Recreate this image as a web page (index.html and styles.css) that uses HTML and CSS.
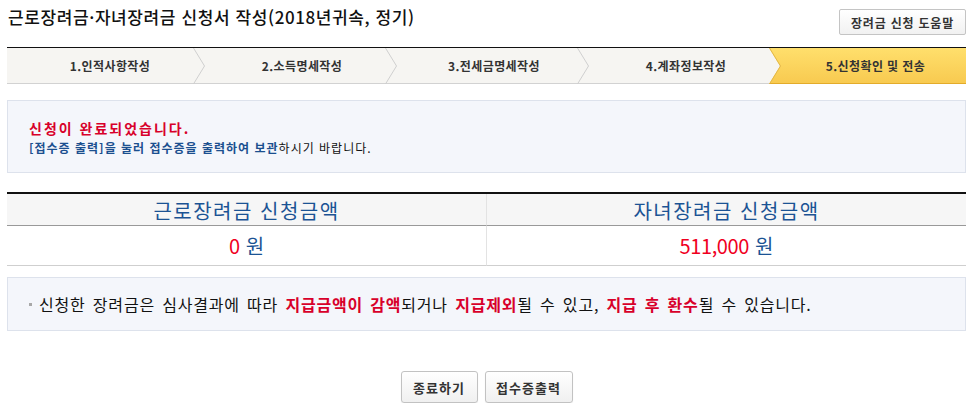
FILE: index.html
```html
<!DOCTYPE html>
<html lang="ko">
<head>
<meta charset="utf-8">
<title>근로장려금·자녀장려금 신청서 작성</title>
<link rel="stylesheet" href="styles.css">
</head>
<body>
<div class="page">
  <div class="head">
    <h1 class="title">근로장려금·자녀장려금 신청서 작성(2018년귀속, 정기)</h1>
    <button class="help-btn" type="button">장려금 신청 도움말</button>
  </div>

  <ol class="steps">
    <li class="step s1">1.인적사항작성<svg class="chev" viewBox="0 0 12 36" preserveAspectRatio="none"><polyline points="0.5,0 11.5,18 0.5,36" /></svg></li>
    <li class="step s2">2.소득명세작성<svg class="chev" viewBox="0 0 12 36" preserveAspectRatio="none"><polyline points="0.5,0 11.5,18 0.5,36" /></svg></li>
    <li class="step s3">3.전세금명세작성<svg class="chev" viewBox="0 0 12 36" preserveAspectRatio="none"><polyline points="0.5,0 11.5,18 0.5,36" /></svg></li>
    <li class="step s4">4.계좌정보작성<svg class="chev chev-active" viewBox="0 0 12 36" preserveAspectRatio="none"><polyline points="0.5,0 11.5,18 0.5,36" /></svg></li>
    <li class="step s5 active">5.신청확인 및 전송</li>
  </ol>

  <div class="info-box">
    <p class="done">신청이 완료되었습니다.</p>
    <p class="guide"><strong>[접수증 출력]을 눌러 접수증을 출력하여 보관</strong>하시기 바랍니다.</p>
  </div>

  <div class="amounts">
    <div class="cell th">근로장려금 신청금액</div>
    <div class="cell th">자녀장려금 신청금액</div>
    <div class="cell td"><span class="num">0</span> 원</div>
    <div class="cell td"><span class="num">511,000</span> 원</div>
  </div>

  <div class="notice">
    <span class="bullet"></span>
    <p>신청한 장려금은 심사결과에 따라 <em>지급금액이 감액</em>되거나 <em>지급제외</em>될 수 있고, <em>지급 후 환수</em>될 수 있습니다.</p>
  </div>

  <div class="actions">
    <button class="btn" type="button">종료하기</button>
    <button class="btn" type="button">접수증출력</button>
  </div>
</div>
</body>
</html>
```

FILE: styles.css
```css
* { box-sizing: border-box; }
html, body { margin: 0; padding: 0; background: #fff; }
body {
  font-family: "Noto Sans CJK KR", "Noto Sans", "Liberation Sans", sans-serif;
  color: #111;
}
p { margin: 0; }

.page {
  width: 977px;
  padding: 0 11px 0 7px;
}

.head {
  display: flex;
  justify-content: space-between;
  align-items: flex-start;
  height: 47px;
}
.title {
  margin: 4px 0 0 1px;
  font-size: 17px;
  font-weight: 500;
  line-height: 26px;
  letter-spacing: 0.6px;
  color: #111;
}
.help-btn {
  margin-top: 9px;
  width: 127px;
  height: 26px;
  padding: 0;
  font-family: inherit;
  font-size: 12px;
  font-weight: 700;
  color: #333;
  background: linear-gradient(#ffffff, #f1f1f1);
  border: 1px solid #c4c4c4;
  border-radius: 2px;
  letter-spacing: 0.8px;
}

.steps {
  list-style: none;
  margin: 0;
  padding: 0;
  display: flex;
  height: 37px;
  border-top: 1px solid #111;
  border-bottom: 1px solid #d2d2d2;
  background: #f6f5f2;
}
.step {
  position: relative;
  display: flex;
  align-items: center;
  justify-content: center;
  height: 35px;
  font-size: 12px;
  font-weight: 700;
  color: #333;
  letter-spacing: 0.4px;
}
.s1 { width: 186px; padding-left: 20px; }
.s2 { width: 192px; padding-left: 26px; }
.s3 { width: 192px; padding-left: 26px; }
.s4 { width: 192px; padding-left: 26px; }
.s5 { width: 197px; padding-left: 16px; }

.chev {
  position: absolute;
  top: 0;
  right: -12px;
  width: 12px;
  height: 36px;
  z-index: 2;
}
.chev polyline {
  fill: none;
  stroke: #cfcfcf;
  stroke-width: 1;
}
.chev-active polyline { stroke: #e2b84a; }

.step.active { z-index: 1; }
.step.active::before {
  content: "";
  position: absolute;
  left: 0;
  top: 0;
  right: 0;
  bottom: -1px;
  background: linear-gradient(#ffdf6c, #f8ca50 calc(100% - 1px), #e3ab2a calc(100% - 1px));
  clip-path: polygon(0 0, 100% 0, 100% 100%, 0 100%, 11px 50%);
  z-index: -1;
}

.info-box {
  margin-top: 16px;
  height: 73px;
  padding: 18px 21px 0;
  background: #f4f6fb;
  border: 1px solid #dde2ec;
}
.done {
  font-size: 14px;
  font-weight: 700;
  color: #d8002a;
  line-height: 18px;
  letter-spacing: 2px;
}
.guide {
  margin-top: 2px;
  font-size: 12px;
  line-height: 18px;
  color: #111;
  letter-spacing: 1px;
}
.guide strong { color: #1b4f8f; font-weight: 700; }

.amounts {
  margin-top: 19px;
  display: grid;
  grid-template-columns: 480px 479px;
  border-top: 2px solid #111;
}
.cell {
  display: flex;
  align-items: center;
  justify-content: center;
  font-size: 20px;
  color: #1b5394;
}
.cell:nth-child(odd) { border-right: 1px solid #e3e3e3; }
.th {
  height: 32px;
  background: #f6f6f6;
  border-bottom: 1px solid #999;
  padding-top: 1px;
  letter-spacing: 1.5px;
}
.td {
  height: 40px;
  border-bottom: 1px solid #cfcfcf;
}
.num { color: #f0001e; margin-right: 6px; letter-spacing: -0.4px; }

.notice {
  margin-top: 11px;
  height: 54px;
  display: flex;
  align-items: center;
  padding-left: 21px;
  background: #f4f6fb;
  border: 1px solid #dde2ec;
}
.bullet {
  width: 3px;
  height: 3px;
  background: #a8a8a8;
  margin-right: 7px;
}
.notice p {
  font-size: 16px;
  line-height: 20px;
  color: #111;
  word-spacing: 2px;
  letter-spacing: 0.8px;
}
.notice em {
  font-style: normal;
  font-weight: 700;
  color: #d8002a;
}

.actions {
  margin-top: 40px;
  display: flex;
  justify-content: center;
  gap: 7px;
  padding-left: 0;
}
.btn {
  height: 32px;
  padding: 0;
  font-family: inherit;
  font-size: 13px;
  font-weight: 700;
  color: #333;
  background: linear-gradient(#ffffff, #f0f0f0);
  border: 1px solid #c2c2c2;
  border-radius: 3px;
  box-shadow: 0 1px 1px rgba(0,0,0,0.08);
  letter-spacing: 1px;
}
.btn:first-child { width: 77px; }
.btn:last-child { width: 88px; }
```
